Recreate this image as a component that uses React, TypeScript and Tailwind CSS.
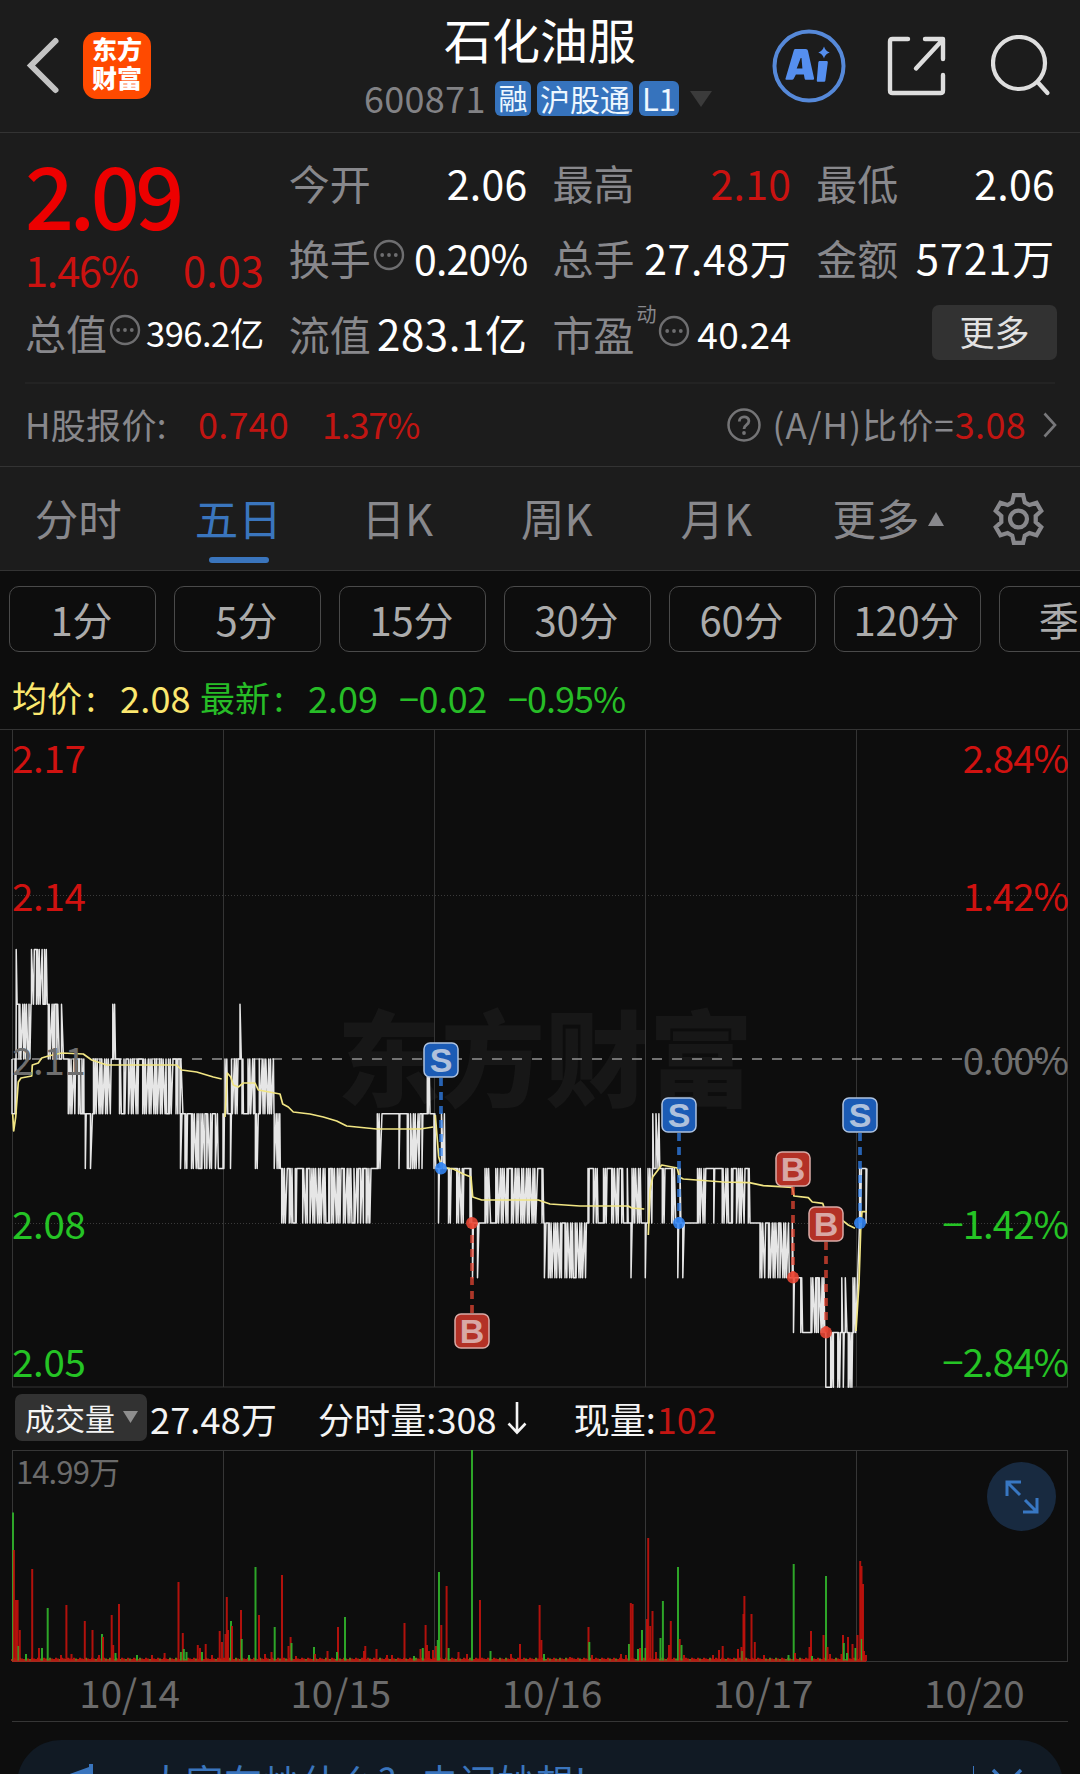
import React from "react";

/* Runs of minute-by-minute price flips: [x start, x end, upper tick, lower tick]. Ticks are cents above 2.00. */
const RUNS: number[][] = [
  [12, 13.6, 11, 10], [15, 16, 11, 10], [16.2, 17.6, 13, 12], [19, 28, 12, 11], [29, 31, 12, 11],
  [31.5, 34.3, 13, 12], [36.5, 43, 13, 12], [44.5, 48, 13, 12], [48.3, 55, 12, 11], [56.8, 59.3, 12, 11], [61.5, 64, 12, 11],
  [68.3, 76, 11, 10], [78.5, 80.5, 11, 10], [82, 84, 11, 10], [85.3, 87.5, 10, 9], [90.5, 92.5, 10, 9],
  [93.5, 111.5, 11, 10], [112.8, 117.3, 12, 11], [119.5, 121.7, 11, 10], [124, 126, 11, 10], [128.5, 138.5, 11, 10],
  [142.7, 166.5, 11, 10], [168.5, 173, 11, 10], [176, 178, 11, 10], [180, 183.4, 11, 10],
  [180.5, 182, 10, 9], [185, 187.5, 10, 9], [191.5, 199, 10, 9], [201, 205, 10, 9], [206.8, 213.3, 10, 9], [215.4, 218.4, 10, 9],
  [223, 224.4, 10, 9], [225, 228.3, 11, 10], [230.5, 231.6, 10, 9], [231.5, 238.5, 11, 10], [240, 241.3, 12, 11], [242, 243.4, 11, 10],
  [248, 255, 11, 10], [255.4, 258.3, 10, 9], [259.3, 274, 11, 10], [274.2, 280.3, 10, 9],
  [281.7, 287.5, 9, 8], [289.3, 292.8, 9, 8], [295.3, 296.8, 9, 8], [302.7, 307.5, 9, 8], [310, 326.7, 9, 8], [328.8, 330, 9, 8],
  [331.7, 341, 9, 8], [343.4, 352, 9, 8], [354, 358.5, 9, 8], [360.5, 363.5, 9, 8], [366.2, 371, 9, 8],
  [377.3, 382.7, 10, 9], [399, 400.2, 10, 9], [407.3, 408.5, 10, 9], [410.5, 420.3, 10, 9], [422, 423.5, 10, 9], [427.3, 431, 11, 10],
  [434, 437.4, 10, 9], [438.5, 440, 9, 8], [441.5, 445, 10, 9], [448.5, 451.8, 9, 8], [456.7, 463.8, 9, 8], [470, 471.7, 9, 8],
  [472.5, 473.5, 8, 7], [477.5, 479, 8, 7], [485, 491, 9, 8], [495.8, 508.4, 9, 8], [511.5, 538.5, 9, 8], [542, 543.8, 9, 8],
  [544.4, 546, 8, 7], [548.4, 562, 8, 7], [565, 573.5, 8, 7], [575.2, 586.8, 8, 7],
  [588, 589.2, 9, 8], [593.4, 598.3, 9, 8], [603.5, 607.3, 9, 8], [611.7, 619.2, 9, 8], [621.7, 625, 9, 8], [627.3, 630, 9, 8],
  [631, 632.2, 8, 7], [632, 642, 9, 8], [645.3, 647, 8, 7], [648, 652.4, 9, 8], [652.8, 654.3, 10, 9], [656, 660.5, 10, 9],
  [662.3, 665, 9, 8], [671.7, 675.8, 9, 8], [677.8, 679.5, 8, 7], [680, 681.5, 9, 8], [682.8, 684.2, 8, 7],
  [697.5, 706, 9, 8], [713.8, 715, 9, 8], [722.2, 729.5, 9, 8], [731.5, 733, 9, 8], [736.5, 745, 9, 8], [748.3, 750, 9, 8],
  [760, 766, 8, 7], [768.5, 778.5, 8, 7], [780, 789.3, 8, 7], [792.3, 793.3, 8, 7], [793.5, 794.5, 7, 6], [800.8, 802.8, 7, 6],
  [811, 816.6, 7, 6], [818.3, 825.6, 7, 6], [825.8, 826.8, 6, 5], [830.7, 833.4, 6, 5], [837.8, 841.6, 6, 5],
  [841.8, 843, 7, 6], [843.3, 845, 6, 5], [845.3, 847, 7, 6], [848.3, 852.6, 6, 5], [853, 857.3, 7, 6], [859.6, 861.7, 9, 8], [866, 867.5, 9, 8],
];

const tickY = (tick: number) => 1059 + (11 - tick) * 54.7;

function buildPricePath() {
  const points: string[] = [];
  let level = 11;
  RUNS.forEach(([x0, x1, hi, lo], i) => {
    if (level !== hi && level !== lo) level = level > hi ? hi : lo;
    points.push(`${x0},${tickY(level)}`);
    let x = x0;
    let k = i;
    while (x <= x1) {
      level = level === hi ? lo : hi;
      points.push(`${x.toFixed(1)},${tickY(level)}`);
      x += k % 5 === 0 ? 2 : 0.9;
      k++;
    }
    const next = RUNS[i + 1];
    if (!next) return;
    let end = level;
    if (next[2] === lo) end = lo;
    else if (next[3] === hi) end = hi;
    else if (next[2] === hi) end = i % 3 === 0 ? lo : hi;
    if (end !== level) {
      level = end;
      points.push(`${x1.toFixed(1)},${tickY(level)}`);
    }
  });
  return "M" + points.join("L");
}

const PRICE_PATH = buildPricePath();

const AVG_PATH =
  "M12.7,1114L13.7,1131L15.7,1117L18.3,1082L21,1078L31.7,1076L32.3,1065L38.3,1063L41.7,1058L48.3,1056L61.7,1053L83.3,1054L91.7,1060L106.7,1065L176.7,1065L181.7,1070L196.7,1072L213.3,1077L221.7,1079" +
  "M225,1117L227.3,1073L230.7,1077L233.3,1085L238.3,1087L243.3,1083L255,1083L258.3,1090L280,1094L282.7,1104L288.3,1107L293.3,1112L310,1114L323.3,1117L336.7,1121L346.7,1126L376.7,1129L396.7,1129L420,1129L433.3,1127" +
  "M435.3,1115L438.7,1157L441.7,1167L453.3,1169L463.3,1174L471,1177L472.7,1197L481.7,1200L538.3,1200L550,1204L580,1206L628.3,1206L631.7,1208L644.3,1209" +
  "M648.3,1235L650,1190L652.7,1177L661.7,1165L677.3,1168L679.3,1177L683.3,1179L723.3,1182L749.3,1182.7L763.3,1185.7L792.3,1187.3L794,1196L808.3,1197.7L812.3,1202L822.7,1203.3L826,1213.3L840,1218.3L848.3,1225L855,1228.3" +
  "M856,1331L859,1283L860.7,1230L862,1211.7L867,1211.7";

type Marker = { kind: "S" | "B"; x: number; y: number; dot: number };
const MARKERS: Marker[] = [
  { kind: "S", x: 441, y: 1060, dot: 1168.5 },
  { kind: "B", x: 472, y: 1331, dot: 1223 },
  { kind: "S", x: 679, y: 1115, dot: 1223 },
  { kind: "B", x: 793, y: 1169, dot: 1277.5 },
  { kind: "B", x: 826, y: 1224, dot: 1332.5 },
  { kind: "S", x: 860, y: 1115, dot: 1223 },
];

/* Volume bars: [x, height, 0 = down / 1 = up] */
const VOLUME: number[][] = [
  [13, 148.6, 0], [13.9, 111, 1], [16, 61, 1], [17.6, 61, 1], [18.5, 15, 0], [19.8, 31, 1], [26, 7, 0], [32.2, 92, 1], [39, 13, 1], [42, 13, 0], [47.7, 53, 0],
  [61, 6, 1], [66.4, 56, 1], [71.5, 7, 1], [84.8, 40, 1], [92.5, 31, 1], [99, 6, 1], [102, 27, 0], [103, 24, 1], [111.7, 46, 1], [113.2, 16, 1], [115.5, 8, 0], [119, 57, 1],
  [137, 6, 0], [152, 6, 1], [164.6, 8, 1], [178.5, 79, 1], [181, 9, 0], [182.8, 28, 1], [183.8, 12, 0], [186.5, 9, 0], [197.8, 16, 1], [200, 13, 1], [202, 9, 0], [205.7, 17, 1], [212, 6, 1], [219.7, 30, 1], [222, 19, 1],
  [225.5, 27, 1], [226.8, 64, 1], [228, 31, 1], [231, 40, 0], [232, 35, 1], [241, 51, 1], [241.7, 22, 0], [249, 6, 0], [255.5, 94, 0], [259, 46, 1], [265, 7, 1], [271.5, 9, 1], [274.7, 34, 0], [282, 86, 1], [288.5, 15, 1], [290.6, 24, 1], [291.5, 18, 0], [296, 5, 1],
  [314, 14, 0], [315, 7, 1], [327.5, 10, 1], [338, 34, 1], [345, 44, 0], [337, 9, 0], [364, 10, 1], [365.3, 15, 1], [376.5, 12, 1], [387, 6, 1], [392, 6, 1], [404.5, 38, 1], [414, 5, 0], [420.5, 12, 1], [422.8, 13, 0], [425.6, 36, 1], [427, 16, 1], [429, 10, 1], [433, 11, 1], [436, 15, 1],
  [437.8, 21, 0], [439, 89, 0], [441.3, 36, 1], [446.6, 75, 1], [448.6, 13, 0], [458.5, 9, 1], [467, 7, 1], [472, 211, 0], [480, 61, 1], [490.5, 10, 0], [511, 7, 1], [520, 17, 1], [539.6, 56, 1], [541.4, 21, 1], [544, 7, 0],
  [570, 4, 1], [588.5, 34, 1], [589.3, 19, 0], [592, 6, 1], [621, 7, 1], [626, 6, 1], [629, 17, 0], [630.8, 58, 1], [632.6, 57, 1], [638, 12, 0], [640, 13, 1], [642, 31, 0], [645.5, 13, 0],
  [647, 42, 1], [648.2, 123, 1], [650.2, 35, 1], [652.5, 50, 1], [656, 9, 1], [660.5, 23, 0], [662.9, 60, 0], [669, 16, 1], [670.8, 40, 1], [678, 94, 0], [679.7, 22, 1], [681.5, 16, 0], [684, 6, 1],
  [713, 6, 1], [719, 11, 1], [722.7, 15, 1], [738, 12, 1], [741.5, 14, 1], [742.4, 10, 0], [743.5, 47, 1], [744.4, 65, 1], [751.5, 47, 1], [754.8, 19, 1], [764, 6, 1], [788.5, 6, 0], [793.7, 97, 0], [795, 8, 1],
  [809.5, 14, 1], [811, 30, 1], [812, 5, 0], [823.5, 26, 1], [826, 85, 0], [827.5, 14, 1], [830, 7, 1], [841.5, 7, 1], [843, 26, 1], [843.8, 18, 0], [848, 24, 1], [847, 8, 0], [852.5, 17, 1], [855.5, 13, 0], [857.5, 26, 1],
  [860.2, 100, 1], [861.5, 95, 1], [861.8, 22, 0], [863, 77, 1], [864, 10, 1], [866, 6, 1],
];

const GRID_X = [12.5, 223.5, 434.5, 645.5, 856.5, 1067.5];

function InfoDots() {
  return (
    <svg viewBox="0 0 32 32" className="h-8 w-8 shrink-0 text-[#6e6e70]" fill="none" stroke="currentColor" strokeWidth="2.4">
      <circle cx="16" cy="16" r="14" />
      <g fill="currentColor" stroke="none">
        <circle cx="9.2" cy="16" r="1.9" />
        <circle cx="16" cy="16" r="1.9" />
        <circle cx="22.8" cy="16" r="1.9" />
      </g>
    </svg>
  );
}

function Header() {
  return (
    <header className="flex h-[133px] border-b border-[#333] bg-[#1c1c1c]">
      <div className="flex w-[364px] items-center pb-0.5 pl-[26px]">
        <svg viewBox="0 0 36 60" className="h-[60px] w-9" fill="none" stroke="#c3c3c3" strokeWidth="6" strokeLinecap="round">
          <path d="M29.5 6 5 30.5 29.5 55" />
        </svg>
        <div className="ml-[21px] flex h-[67px] w-[68px] flex-col items-center justify-center rounded-[14px] bg-[#ff4a00] pb-1 text-[25px] leading-[29px] font-black text-white">
          <span>东方</span>
          <span>财富</span>
        </div>
      </div>
      <div className="flex w-[352px] flex-col">
        <div className="mt-2.5 pl-[80px] text-[48px] leading-[56px] whitespace-nowrap text-white">石化油服</div>
        <div className="mt-[14px] flex h-[37px] items-center">
          <span className="w-[131px] pb-0.5 text-[36px] leading-[35px] tracking-[0.3px] text-[#828285]">600871</span>
          <span className="flex h-[35px] w-9 items-center justify-center rounded-[6px] bg-[#3673bd] pb-0.5 text-[29px] text-[#edf7ff]">融</span>
          <span className="ml-1.5 flex h-[35px] w-24 items-center justify-center rounded-[6px] bg-[#3673bd] pb-0.5 text-[30px] whitespace-nowrap text-[#edf7ff]">沪股通</span>
          <span className="ml-1.5 flex h-[35px] w-10 items-center justify-center rounded-[6px] bg-[#3673bd] pb-0.5 text-[31px] text-[#edf7ff]">L1</span>
          <svg viewBox="0 0 22 16" className="ml-[11px] h-4 w-[22px]" fill="#3b3b3b"><path d="M0 0h22L11 16z" /></svg>
        </div>
      </div>
      <div className="flex h-[131px] items-center pl-[56px]">
        <svg viewBox="0 0 74 74" className="h-[74px] w-[74px]" fill="none">
          <circle cx="37" cy="37" r="34.5" stroke="#5689d9" strokeWidth="4" />
          <path fillRule="evenodd" fill="#558ff0" d="M23.5 20h10c1.6 0 2.2.7 2.5 2l6 27c.2 1.300-.3 1.800-1.500 1.800h-6.300c-1 0-1.400-.4-1.600-1.300l-.7-4h-8l-2.200 4.200c-.5.8-1 1.100-2 1.100h-5c-1.300 0-1.600-.7-1-1.800l8-27.200c.3-1.200.8-1.800 1.800-1.800Zm5.200 9-4 10.500h5.700L29.500 29Z" />
          <path fill="#558ff0" d="M47.8 32h6.600c1 0 1.500.5 1.400 1.500l-2.400 17.800c-.1 1-.7 1.500-1.700 1.500h-5.600c-1 0-1.400-.5-1.300-1.500l1.500-17.800c.1-1 .6-1.500 1.500-1.500ZM52 17.500c1.200 3.400 2.500 4.800 5.700 5.900-3.200 1.200-4.500 2.500-5.700 6-1.200-3.500-2.500-4.800-5.700-6 3.200-1.100 4.500-2.500 5.700-5.900Z" />
        </svg>
        <svg viewBox="0 0 60 60" className="ml-[41px] h-[60px] w-[60px]" fill="none" stroke="#dedede" strokeWidth="4.400" strokeLinecap="round" strokeLinejoin="round">
          <path d="M21 3H5.500Q3 3 3 5.500V54.500Q3 57 5.500 57H53.500Q56 57 56 54.500V39M38 3H56V23M54.500 5 29 32.500" />
        </svg>
        <svg viewBox="0 0 60 62" className="ml-[44px] h-[62px] w-[60px]" fill="none" stroke="#dedede" strokeWidth="4.200" strokeLinecap="round">
          <circle cx="28" cy="28" r="26" />
          <path d="M47 47.500 56.500 58" />
        </svg>
      </div>
    </header>
  );
}

function Cell({ label, children, last = false }: { label: React.ReactNode; children: React.ReactNode; last?: boolean }) {
  return (
    <div className={last ? "flex h-[74.5px] items-center justify-between pb-0.5 text-[41px] whitespace-nowrap" : "flex h-[74.5px] items-center justify-between pb-[5px] text-[41px] whitespace-nowrap"}>
      <span className="flex items-center text-[#88888c]">{label}</span>
      <span className="flex items-center tracking-[0.3px] text-white">{children}</span>
    </div>
  );
}

function Quotes() {
  return (
    <section className="h-[334px] border-b border-[#333] bg-[#1c1c1c] px-[25px] pt-[15px]">
      <div className="grid h-[235.5px] grid-cols-4 gap-x-[25px] border-b-2 border-[#232323]">
        <div>
          <div className="flex h-[100px] items-center pb-[11px] text-[86px] leading-none font-medium tracking-[-4.5px] text-[#ed0000]">2.09</div>
          <div className="flex h-12 items-center justify-between pb-1 text-[41.5px] tracking-[-1.2px] text-[#cb1210]">
            <span>1.46%</span><span className="tracking-[0px]">0.03</span>
          </div>
          <Cell last label={<>总值<span className="mb-[5px] ml-0.5"><InfoDots /></span></>}>
            <span className="text-[34.5px] tracking-[-0.5px]">396.2亿</span>
          </Cell>
        </div>
        <div>
          <Cell label="今开">2.06</Cell>
          <Cell label={<>换手<span className="mb-[4px] ml-0.5"><InfoDots /></span></>}>
            <span className="tracking-[-0.8px]">0.20%</span>
          </Cell>
          <Cell last label="流值"><span className="text-[42px] tracking-[0.6px]">283.1亿</span></Cell>
        </div>
        <div>
          <Cell label="最高"><span className="text-[#cb1210]">2.10</span></Cell>
          <Cell label="总手"><span className="tracking-[0.6px]">27.48万</span></Cell>
          <Cell last label={<>市盈<span className="mb-[38px] ml-0.5 text-[20px] leading-5">动</span><span className="mb-[5px] ml-px"><InfoDots /></span></>}>
            <span className="text-[37px]">40.24</span>
          </Cell>
        </div>
        <div>
          <Cell label="最低">2.06</Cell>
          <Cell label="金额"><span className="text-[42px] tracking-[0.8px]">5721万</span></Cell>
          <div className="flex justify-end pt-2">
            <button className="-mr-0.5 h-[55px] w-[125px] rounded-[7px] bg-[#323232] pb-1 text-[35px] leading-none text-[#e2e2e2]">更多</button>
          </div>
        </div>
      </div>
      <div className="flex h-[82px] items-center pb-[3px] text-[35px] whitespace-nowrap text-[#88888c]">
        <span className="w-[173px] tracking-[0.3px]">H股报价:</span>
        <span className="w-[124px] text-[36px] tracking-[0.2px] text-[#c11512]">0.740</span>
        <span className="text-[36px] tracking-[-1.2px] text-[#c11512]">1.37%</span>
        <span className="ml-auto flex items-center">
          <svg viewBox="0 0 34 34" className="mt-[3px] mr-[11px] h-[34px] w-[34px]" fill="none" stroke="#747476" strokeWidth="2.500">
            <circle cx="17" cy="17" r="15.500" />
            <path d="M12.300 13.500c0-6 9.600-6 9.600-.4 0 4-4.900 3.700-4.900 7.900" strokeWidth="2.800" />
            <circle cx="17" cy="25" r="1.900" fill="#747476" stroke="none" />
          </svg>
          <span className="tracking-[1.1px]">(A/H)比价=</span>
          <span className="text-[36px] tracking-[0.3px] text-[#c11512]">3.08</span>
        </span>
        <svg viewBox="0 0 14 26" className="mt-[3px] -mr-0.5 ml-[17px] h-[26px] w-3.5" fill="none" stroke="#77777a" strokeWidth="2.600"><path d="M1.500 1.500 12 13 1.500 24.500" /></svg>
      </div>
    </section>
  );
}

const TABS = ["分时", "五日", "日K", "周K", "月K"];

function Tabs() {
  return (
    <nav className="flex h-[104px] border-b border-[#333] bg-[#1c1c1c] text-[43.5px] text-[#88888c]">
      {TABS.map((t, i) => (
        <div key={t} className={i === 1 ? "relative flex w-[159.500px] justify-center pt-[19px] pr-0.5 text-[#3a75bd]" : "flex w-[159.500px] justify-center pt-[19px] pr-[3px]"}>
          <span className="leading-[64px]">{t}</span>
          {i === 1 && <span className="absolute bottom-[7px] left-[49px] h-1.5 w-[60px] rounded-full bg-[#3a75bd]" />}
        </div>
      ))}
      <div className="ml-[35px] flex pt-[19px]">
        <span className="leading-[64px]">更多</span>
        <svg viewBox="0 0 16 14" className="mt-[26px] ml-2 h-3.5 w-4" fill="#88888c"><path d="M8 0 16 14H0z" /></svg>
      </div>
      <svg viewBox="0 0 52 52" className="mt-[25px] ml-[48px] h-[54px] w-[53px]" fill="none" stroke="#88888c" strokeWidth="4.200">
        <path d="M21.500 2.500h9l1.700 7.200 4.500 2.600 7-2.200 4.600 8-5.400 5v5.800l5.400 5-4.600 8-7-2.200-4.500 2.600-1.700 7.200h-9l-1.700-7.200-4.500-2.600-7 2.200-4.600-8 5.400-5v-5.800l-5.400-5 4.600-8 7 2.200 4.500-2.600z" />
        <circle cx="26" cy="26" r="8.300" />
      </svg>
    </nav>
  );
}

const PERIODS = ["1分", "5分", "15分", "30分", "60分", "120分", "季K"];

function Periods() {
  return (
    <div className="flex h-[97px] gap-[18px] overflow-hidden pt-[15px] pl-[9px]">
      {PERIODS.map((p) => (
        <div key={p} className="flex h-[66px] w-[147px] shrink-0 items-center justify-center rounded-[10px] border border-[#4a4a4a] text-[40px] tracking-[-0.2px] text-[#ababab]">
          <span className="pr-0.5 pb-px">{p}</span>
        </div>
      ))}
    </div>
  );
}

function Legend() {
  return (
    <div className="flex h-[61px] items-center pb-0.5 pl-3 text-[35px] whitespace-nowrap text-[#27bd27]">
      <span className="w-[108px] text-[#fbe76f]">均价<span className="pl-1">:</span></span>
      <span className="w-[80px] text-[36px] tracking-[0.2px] text-[#fbe76f]">2.08</span>
      <span className="w-[108px]">最新<span className="pl-1">:</span></span>
      <span className="w-[91px] text-[36px]">2.09</span>
      <span className="w-[109px] text-[36px] tracking-[-0.4px]">−0.02</span>
      <span className="text-[36px] tracking-[-1px]">−0.95%</span>
    </div>
  );
}

const LEFT_AXIS: [string, string][] = [
  ["2.17", "-top-px text-[#d01210]"],
  ["2.14", "top-[137px] text-[#d01210]"],
  ["2.11", "top-[301px] text-[#6f6f6f]"],
  ["2.08", "top-[465px] text-[#25c425]"],
  ["2.05", "top-[603px] text-[#25c425]"],
];
const RIGHT_AXIS: [string, string][] = [
  ["2.84%", "-top-px text-[#d01210]"],
  ["1.42%", "top-[137px] text-[#d01210]"],
  ["0.00%", "top-[301px] text-[#6f6f6f]"],
  ["−1.42%", "top-[465px] text-[#25c425]"],
  ["−2.84%", "top-[603px] text-[#25c425]"],
];

function PriceChart() {
  return (
    <div className="relative h-[659px]">
      <svg viewBox="0 729 1080 659" className="block h-[659px] w-[1080px]" fill="none">
        <text x="337" y="1099" fontSize="104" fontWeight="900" fill="#171717">东方财富</text>
        <path d={GRID_X.map((x) => `M${x} 729.500V1387`).join("")} stroke="#343434" />
        <path d="M12 1387H1068" stroke="#343434" />
        <path d="M0 729.500H1080" stroke="#343434" />
        <path d="M12 895.500H1068M12 1223.500H1068" stroke="#3a3a3a" strokeDasharray="1 2" />
        <path d="M12 1059H1068" stroke="#929292" strokeWidth="1.700" strokeDasharray="10 10" />
        <path d={PRICE_PATH} stroke="#e6e6e6" strokeWidth="1.500" strokeLinejoin="round" />
        <path d={AVG_PATH} stroke="#f1e583" strokeWidth="1.700" strokeLinejoin="round" />
      </svg>
      {LEFT_AXIS.map(([t, c]) => (
        <span key={t} className={`absolute left-3 text-[38.500px] leading-[56px] tracking-[-0.3px] ${c}`}>{t}</span>
      ))}
      {RIGHT_AXIS.map(([t, c]) => (
        <span key={t} className={`absolute right-[12px] text-[38.500px] leading-[56px] tracking-[-1px] ${c}`}>{t}</span>
      ))}
      <svg viewBox="0 729 1080 659" className="absolute inset-0 h-[659px] w-[1080px]" fontFamily="Liberation Sans, sans-serif">
        {MARKERS.map((m) => {
          const sell = m.kind === "S";
          const color = sell ? "#3285f5" : "#ec4835";
          return (
            <g key={m.x}>
              <path d={`M${m.x} ${m.y + (m.y < m.dot ? 18 : -18)}V${m.dot}`} stroke={color} strokeOpacity="0.72" strokeWidth="3.700" strokeDasharray="8 6" />
              <circle cx={m.x} cy={m.dot} r="6" fill={color} fillOpacity="0.88" />
              <rect x={m.x - 17} y={m.y - 17} width="34" height="34" rx="6" fill={sell ? "#1b5bb5" : "#b33126"} stroke={sell ? "#adc2e0" : "#d9aaa6"} strokeWidth="1.500" />
              <text x={m.x} y={m.y + 12} textAnchor="middle" fontSize="34" fontWeight="700" fill={sell ? "#afc1dc" : "#d8a8a5"}>{m.kind}</text>
            </g>
          );
        })}
      </svg>
    </div>
  );
}

function VolumeBar() {
  return (
    <div className="flex h-[62px] items-center pb-[3px] pl-[15px] text-[36px] whitespace-nowrap text-[#f4f4f4]">
      <div className="flex h-[47px] w-[132px] items-center rounded-[7px] bg-[#323232] pb-px pl-2.5 text-[30px]">
        成交量
        <svg viewBox="0 0 15 12" className="ml-2 h-3 w-[15px]" fill="#8e8e8e"><path d="M0 0h15L7.500 12z" /></svg>
      </div>
      <span className="ml-[3px] w-[168px] tracking-[0.2px]">27.48万</span>
      <span className="tracking-[0.1px]">分时量:308</span>
      <svg viewBox="0 0 20 34" className="mr-[47px] ml-2.5 h-[34px] w-5" fill="none" stroke="#f4f4f4" strokeWidth="2.600"><path d="M10 1v30M1.500 22.500 10 31.500 18.500 22.500" /></svg>
      <span>现量:</span>
      <span className="ml-px text-[#c41512]">102</span>
    </div>
  );
}

function VolumeChart() {
  return (
    <div className="relative h-[212px]">
      <svg viewBox="0 0 1080 212" className="block h-[212px] w-[1080px]" fill="none">
        <path d={GRID_X.map((x) => `M${x} 0.500V211`).join("") + "M12 0.500H1068M12 211.500H1068"} stroke="#363636" />
        {Array.from({ length: 426 }, (_, i) => {
          const x = 12 + i * 2;
          const up = (i * 7) % 5 < 3 || (i * 13) % 11 < 4;
          return <path key={i} d={`M${x} 211v${-(2 + ((i * i * 7) % 23 === 1 ? 4 : (i * 5) % 3) * 0.6)}`} stroke={up ? "#c3180e" : "#6f7a1c"} strokeWidth="1.900" />;
        })}
        {VOLUME.map(([x, h, up], i) => (
          <path key={i} d={`M${x} 211v${-h}`} stroke={up ? "#c3120c" : "#2fae2a"} strokeWidth="2" strokeOpacity={up ? 0.9 : 0.95} />
        ))}
        <path d="M12 211.200H866" stroke="#a5281c" strokeWidth="1.400" />
      </svg>
      <span className="absolute -top-px left-4 text-[31px] leading-[44px] tracking-[-0.9px] text-[#6b6b6b]">14.99万</span>
      <div className="absolute top-3 right-6 flex h-[69px] w-[69px] items-center justify-center rounded-full bg-[#182a40]">
        <svg viewBox="0 0 34 34" className="h-[34px] w-[34px]" fill="none" stroke="#3877c2" strokeWidth="3">
          <path d="M2 16V2H16M2.500 2.500 15 15M32 18V32H18M31.500 31.500 20 20" />
        </svg>
      </div>
    </div>
  );
}

export default function App() {
  return (
    <div className="h-[1774px] w-[1080px] overflow-hidden bg-[#0d0d0d] font-['Noto_Sans_CJK_SC',sans-serif] leading-none">
      <Header />
      <Quotes />
      <Tabs />
      <Periods />
      <div className="-mt-px"><Legend /></div>
      <div className="mt-px"><PriceChart /></div>
      <VolumeBar />
      <VolumeChart />
      <div className="mx-3 grid h-[60px] grid-cols-5 border-b border-[#363636] text-center text-[38.500px] leading-[58px] text-[#6b6b6b]">
        {["10/14", "10/15", "10/16", "10/17", "10/20"].map((d) => (
          <span key={d} className="pl-6">{d}</span>
        ))}
      </div>
      <div className="mx-[17px] mt-[18px] flex h-[88px] items-center rounded-full bg-[#111a24] pl-[48px] text-[38px] whitespace-nowrap text-[#3a75bd]">
        <svg viewBox="0 0 40 44" className="-mt-0.5 h-11 w-10 shrink-0" fill="currentColor"><path d="M28 3v38L12 31H2V14L24 6V3Z" /></svg>
        <span className="ml-[42px] pb-1.5 tracking-[0.500px]">大家在炒什么?</span>
        <span className="ml-[24px] pb-1.5 tracking-[0.500px]">去问妙想!</span>
        <span className="mr-[17px] ml-auto h-9 w-px bg-[#3a75bd]" />
        <svg viewBox="0 0 32 32" className="mr-[40px] h-8 w-8" fill="none" stroke="currentColor" strokeWidth="3.500"><path d="M2 2 30 30M30 2 2 30" /></svg>
      </div>
    </div>
  );
}
